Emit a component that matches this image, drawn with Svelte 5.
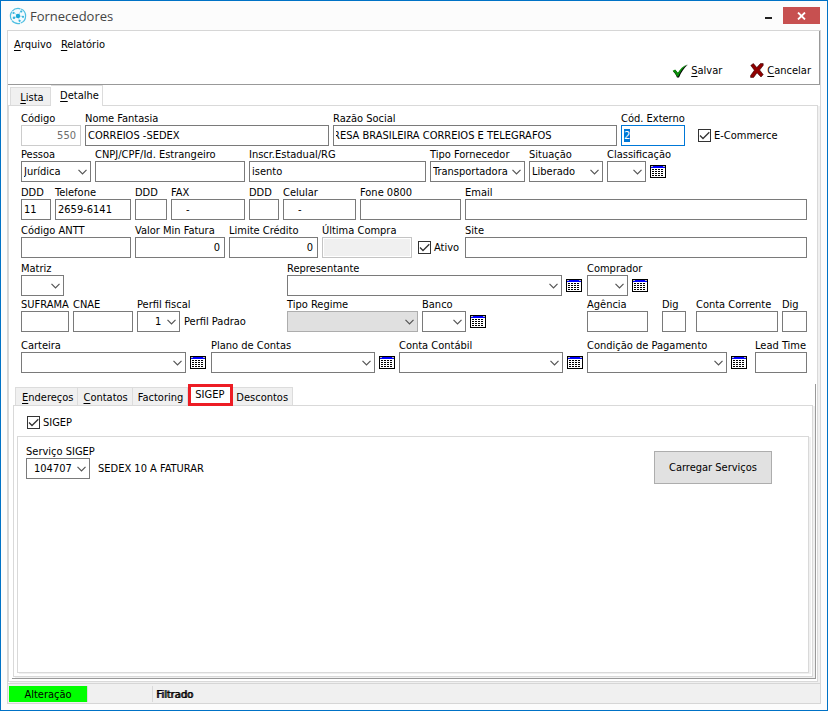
<script>
  import { onMount } from 'svelte';

  let externalCode;
  let activeTab = $state('SIGEP');

  const tabs = [
    { id: 'Endereços', key: 'E', rest: 'ndereços' },
    { id: 'Contatos', key: 'C', rest: 'ontatos' },
    { id: 'Factoring', key: '', rest: 'Factoring' },
    { id: 'SIGEP', key: '', rest: 'SIGEP' },
    { id: 'Descontos', key: '', rest: 'Descontos' }
  ];

  onMount(() => {
    externalCode.focus();
    externalCode.select();
  });
</script>

{#snippet text(id, label, value = '', kind = '')}
  <div class="field">
    <label for={id}>{label}</label>
    <input {id} type="text" class={kind} {value} disabled={kind.includes('disabled')} />
  </div>
{/snippet}

{#snippet combo(id, label, value = '', kind = '')}
  <div class="field">
    <label for={id}>{label}</label>
    <span class="combo">
      <select {id} class={kind} disabled={kind.includes('disabled')}><option>{value}</option></select>
      <svg class="arrow" viewBox="0 0 9 6" width="9" height="6" aria-hidden="true">
        <path d="M.5 .8L4.5 4.8L8.5 .8" fill="none" stroke="#555" stroke-width="1.2" />
      </svg>
    </span>
  </div>
{/snippet}

{#snippet check(id, label)}
  <span class="check">
    <span class="tick">
      <input {id} type="checkbox" checked />
      <svg viewBox="0 0 13 13" width="13" height="13" aria-hidden="true">
        <path d="M2 6.5L5 9.5L11.3 3.2" fill="none" stroke="#333" stroke-width="1.3" />
      </svg>
    </span>
    <label for={id}>{label}</label>
  </span>
{/snippet}

{#snippet lookup(label)}
  <button class="lookup" type="button" aria-label={label}>
    <svg viewBox="0 0 16 13" width="16" height="13" shape-rendering="crispEdges" aria-hidden="true">
      <rect width="16" height="13" fill="#000" />
      <rect x="1" y="1" width="14" height="11" fill="#fff" />
      <rect x="1" y="1" width="14" height="2" fill="#00f" />
      <rect x="1" y="1" width="2" height="1" fill="#bbb" />
      <rect x="13" y="1" width="2" height="1" fill="#bbb" />
      <path d="M2 4.5h12M2 6.5h12M2 8.5h12M2 10.5h12" stroke="#000" stroke-dasharray="2 1" />
    </svg>
  </button>
{/snippet}

<div class="window">
  <header class="titlebar">
    <svg class="logo" viewBox="0 0 18 18" width="18" height="18" aria-hidden="true">
      <circle cx="9" cy="9" r="7.6" fill="#f4fbfe" stroke="#4fbfe2" stroke-width="1.2" stroke-dasharray="9 .7" />
      <path d="M9 9L4.5 5M9 9L12 3.5M9 9L14.5 9.5M9 9L4 11.5M9 9L10.5 14" stroke="#8fd6ec" stroke-width=".8" />
      <circle cx="9" cy="9" r="2.2" fill="#1ba8d6" />
      <circle cx="4.5" cy="6" r="1.1" fill="#36b4dc" />
      <circle cx="12.3" cy="4.5" r="1.1" fill="#36b4dc" />
      <circle cx="14" cy="9.8" r="1.1" fill="#36b4dc" />
      <circle cx="5" cy="10.8" r="1.3" fill="#36b4dc" />
      <circle cx="10.6" cy="13.8" r="1.1" fill="#36b4dc" />
    </svg>
    <h1>Fornecedores</h1>
    <button class="minimize" type="button" aria-label="Minimizar"></button>
    <button class="close" type="button" aria-label="Fechar">
      <svg viewBox="0 0 9 8" width="9" height="8" aria-hidden="true">
        <path d="M1 .5L8 7.5M8 .5L1 7.5" stroke="#fff" stroke-width="1.8" />
      </svg>
    </button>
  </header>

  <div class="client">
    <div class="toolbar">
      <nav>
        <button type="button"><u>A</u>rquivo</button>
        <button type="button"><u>R</u>elatório</button>
      </nav>
      <div class="actions">
        <button type="button">
          <svg viewBox="0 0 16 14" width="16" height="14" aria-hidden="true">
            <path d="M1 7.5L3.5 6L6 9C8.5 5.5 11.5 2.5 16 .5C12 4 9 8.5 7 13.5L5 13.5C4 11 3 9 1 7.5Z" fill="#000" />
            <path d="M.6 6.8L3.2 5.6L5.7 9C8.2 5 11 2.2 14.8 .6C11.2 3.8 8.2 8 6.2 12.6L5 12.6C3.8 10 2.6 8.3 .6 6.8Z" fill="#0a8f0a" />
          </svg>
          <span><u>S</u>alvar</span>
        </button>
        <button type="button">
          <svg viewBox="0 0 14 15" width="14" height="15" aria-hidden="true">
            <path d="M.8 2.4L3.4 .6L6.8 4.6L10.4 .6H13.2V2.4L9.6 7L13.2 11.6L11 14L7 9.8L3.6 14.4H.6V12.6L4.4 7.2Z" fill="#900000" stroke="#300" stroke-width=".6" />
          </svg>
          <span><u>C</u>ancelar</span>
        </button>
      </div>
    </div>

    <div class="tabs main-tabs" role="tablist">
      <button type="button" role="tab" aria-selected="false"><span><u>L</u>ista</span></button>
      <button type="button" role="tab" aria-selected="true" class="active"><span><u>D</u>etalhe</span></button>
    </div>

    <main class="page">
      <form>
        <div class="row identity">
          {@render text('codigo', 'Código', '550', 'right disabled')}
          {@render text('nome', 'Nome Fantasia', 'CORREIOS -SEDEX')}
          {@render text('razao', 'Razão Social', 'RESA BRASILEIRA CORREIOS E TELEGRAFOS', 'scrolled')}
          <div class="field">
            <label for="externo">Cód. Externo</label>
            <input id="externo" type="text" class="current" value="2" bind:this={externalCode} />
          </div>
          {@render check('ecommerce', 'E-Commerce')}
        </div>

        <div class="row tight person">
          {@render combo('pessoa', 'Pessoa', 'Jurídica')}
          {@render text('cnpj', 'CNPJ/CPF/Id. Estrangeiro')}
          {@render text('inscricao', 'Inscr.Estadual/RG', 'isento')}
          {@render combo('tipo', 'Tipo Fornecedor', 'Transportadora')}
          {@render combo('situacao', 'Situação', 'Liberado')}
          {@render combo('classificacao', 'Classificação')}
          {@render lookup('Buscar classificação')}
        </div>

        <div class="row contact">
          {@render text('ddd1', 'DDD', '11')}
          {@render text('telefone', 'Telefone', '2659-6141')}
          {@render text('ddd2', 'DDD')}
          {@render text('fax', 'FAX', '-', 'masked')}
          {@render text('ddd3', 'DDD')}
          {@render text('celular', 'Celular', '-', 'masked')}
          {@render text('fone0800', 'Fone 0800')}
          {@render text('email', 'Email')}
        </div>

        <div class="row values">
          {@render text('antt', 'Código ANTT')}
          {@render text('minimo', 'Valor Min Fatura', '0', 'right')}
          {@render text('limite', 'Limite Crédito', '0', 'right')}
          {@render text('ultima', 'Última Compra', '', 'disabled shaded')}
          {@render check('ativo', 'Ativo')}
          {@render text('site', 'Site')}
        </div>

        <div class="row people">
          {@render combo('matriz', 'Matriz')}
          <span></span>
          {@render combo('representante', 'Representante')}
          {@render lookup('Buscar representante')}
          {@render combo('comprador', 'Comprador')}
          {@render lookup('Buscar comprador')}
        </div>

        <div class="row tight bank">
          {@render text('suframa', 'SUFRAMA')}
          {@render text('cnae', 'CNAE')}
          {@render combo('perfil', 'Perfil fiscal', '1', 'inset-wide')}
          <output for="perfil">Perfil Padrao</output>
          {@render combo('regime', 'Tipo Regime', '', 'disabled')}
          {@render combo('banco', 'Banco')}
          {@render lookup('Buscar banco')}
          <span></span>
          {@render text('agencia', 'Agência')}
          <span></span>
          {@render text('digito1', 'Dig')}
          <span></span>
          {@render text('conta', 'Conta Corrente')}
          {@render text('digito2', 'Dig')}
        </div>

        <div class="row loose accounts">
          {@render combo('carteira', 'Carteira')}
          {@render lookup('Buscar carteira')}
          {@render combo('plano', 'Plano de Contas')}
          {@render lookup('Buscar plano de contas')}
          {@render combo('contabil', 'Conta Contábil')}
          {@render lookup('Buscar conta contábil')}
          {@render combo('condicao', 'Condição de Pagamento')}
          {@render lookup('Buscar condição de pagamento')}
          {@render text('lead', 'Lead Time')}
        </div>
      </form>

      <section class="details">
        <div class="tabs sub-tabs" role="tablist">
          {#each tabs as tab}
            <button
              type="button"
              role="tab"
              aria-selected={activeTab === tab.id}
              class:active={activeTab === tab.id}
              onclick={() => (activeTab = tab.id)}
            ><span>{#if tab.key}<u>{tab.key}</u>{/if}{tab.rest}</span></button>
          {/each}
        </div>
        <div class="sheet">
          {@render check('sigep', 'SIGEP')}
          <div class="panel">
            <div class="service">
              {@render combo('servico', 'Serviço SIGEP', '104707', 'inset')}
              <output for="servico">SEDEX 10 A FATURAR</output>
            </div>
            <button class="load" type="button">Carregar Serviços</button>
          </div>
        </div>
      </section>
    </main>

    <footer class="status">
      <span class="mode">Alteração</span>
      <span class="blank"></span>
      <strong>Filtrado</strong>
    </footer>
  </div>
</div>

<style>
  :global(body) {
    background: #fcfcfc;
  }

  .window,
  .window * {
    box-sizing: border-box;
  }

  .window {
    display: flex;
    flex-direction: column;
    min-height: 100vh;
    padding: 0 6px 6px 6px;
    border: 1px solid #0072c6;
    background: #fcfcfc;
    color: #000;
    font: 11px/14px 'DejaVu Sans Condensed', 'Noto Sans', sans-serif;
  }

  button,
  input,
  select {
    margin: 0;
    padding: 0;
    border: 0;
    border-radius: 0;
    background: none;
    color: inherit;
    font: inherit;
    outline: none;
  }

  u {
    text-underline-offset: 2px;
  }

  .titlebar {
    display: flex;
    align-items: center;
    height: 29px;
    padding: 0 1px 0 2px;
  }

  h1 {
    flex: 1;
    margin: 0 0 0 3px;
    color: #444;
    font: 13px/18px 'Open Sans', 'Noto Sans', sans-serif;
  }

  .minimize {
    width: 7px;
    height: 2px;
    margin: 4px 11px 0 0;
    background: #222;
  }

  .close {
    display: flex;
    align-items: center;
    justify-content: center;
    width: 37px;
    height: 17px;
    background: #c75050;
  }

  .client {
    flex: 1;
    display: flex;
    flex-direction: column;
    border: 1px solid #d6d6d6;
    background: #fff;
  }

  .toolbar {
    height: 54px;
    padding: 7px 8px 0 6px;
    border-right: 1px solid #999;
    border-bottom: 1px solid #999;
  }

  nav {
    display: flex;
    gap: 9px;
  }

  .actions {
    display: flex;
    justify-content: flex-end;
    gap: 28px;
    padding-top: 11px;
  }

  .actions button {
    display: flex;
    align-items: center;
    gap: 3px;
  }

  .tabs {
    display: flex;
    align-items: flex-end;
  }

  .tabs button {
    height: 18px;
    border: 1px solid #dcdcdc;
    border-width: 1px 1px 0 0;
    background: #f0f0f0;
    white-space: nowrap;
  }

  .tabs button:first-child {
    border-left-width: 1px;
  }

  .tabs .active {
    background: #fff;
  }

  .main-tabs {
    height: 20px;
    padding-left: 2px;
  }

  .main-tabs button {
    width: 41px;
    padding: 2px 0 0 3px;
  }

  .main-tabs .active {
    width: 52px;
    height: 21px;
    margin-bottom: -1px;
    padding: 0 0 1px 6px;
    position: relative;
  }

  .page {
    flex: 1;
    display: flex;
    flex-direction: column;
    margin-right: 2px;
    padding: 5px 1px 2px 3px;
    border: 1px solid #d9d9d9;
    box-shadow: 2px 1px 0 #f0f0f0;
  }

  form {
    display: flex;
    flex-direction: column;
    padding: 0 9px;
  }

  .row {
    display: grid;
    column-gap: 4px;
    align-items: end;
    margin-top: 3px;
  }

  .row.tight {
    margin-top: 1px;
  }

  .row.loose {
    margin-top: 6px;
  }

  .row:first-child {
    margin-top: 0;
  }

  .identity {
    grid-template-columns: 60px 244fr 284fr 64px 118px;
  }

  .person {
    grid-template-columns: 70px 150fr 177fr 95px 74px 39px 157fr;
  }

  .contact {
    grid-template-columns: 30px 76px 32px 74px 30px 73px 101px 1fr;
  }

  .values {
    grid-template-columns: 110px 90px 89px 90px 45px 1fr;
  }

  .people {
    grid-template-columns: 43px 215fr 275fr 17px 41px 175fr;
  }

  .bank {
    grid-template-columns: 48px 60px 43px 99fr 131fr 44px 17px 92fr 61px 6px 24px 2px 82px 25px;
  }

  .accounts {
    grid-template-columns: 165fr 17px 164fr 16px 164fr 16px 140fr 20px 52px;
  }

  .field {
    display: flex;
    flex-direction: column;
    min-width: 0;
  }

  label,
  output {
    white-space: nowrap;
  }

  .field label {
    height: 14px;
    line-height: 16px;
  }

  .field input,
  select {
    width: 100%;
    height: 21px;
    padding: 0 2px;
    border: 1px solid #7a7a7a;
    background: #fff;
  }

  select {
    display: block;
    appearance: none;
  }

  select.inset {
    padding-left: 7px;
  }

  select.inset-wide {
    padding-left: 17px;
  }

  select.disabled {
    border-color: #adadad;
    background: #e0e0e0;
    opacity: 1;
  }

  .field .right {
    padding-right: 4px;
    text-align: right;
  }

  .field .disabled:disabled {
    border-color: #ccc;
    color: #6d6d6d;
  }

  .field .shaded:disabled {
    border-color: #c4c4c4;
    background: #f0f0f0;
    box-shadow: inset 0 0 0 1px #fff;
  }

  .field select.disabled:disabled {
    border-color: #adadad;
  }

  .field .scrolled {
    text-indent: -3px;
  }

  .field .masked {
    padding-left: 14px;
  }

  .field .current {
    border-color: #0078d7;
  }

  .current::selection {
    background: #0078d7;
    color: #fff;
  }

  .combo {
    display: block;
    position: relative;
  }

  .arrow {
    position: absolute;
    top: 8px;
    right: 4px;
    pointer-events: none;
  }

  .check {
    display: flex;
    align-items: center;
    gap: 3px;
    height: 21px;
  }

  .check label {
    line-height: 16px;
  }

  .identity .check {
    padding-left: 9px;
  }

  .values .check {
    padding-left: 2px;
  }

  .tick {
    position: relative;
    width: 13px;
    height: 13px;
  }

  .tick input {
    display: block;
    width: 13px;
    height: 13px;
    appearance: none;
    border: 1px solid #333;
    background: #fff;
  }

  .tick svg {
    position: absolute;
    top: 0;
    left: 0;
    visibility: hidden;
    pointer-events: none;
  }

  .tick input:checked + svg {
    visibility: visible;
  }

  .lookup {
    display: flex;
    align-items: center;
    height: 21px;
  }

  output {
    line-height: 21px;
  }

  .details {
    flex: 1;
    display: flex;
    flex-direction: column;
    margin-top: 11px;
    border-right: 1px solid #999;
    border-bottom: 1px solid #999;
  }

  .sub-tabs {
    height: 21px;
    padding-left: 3px;
  }

  .sub-tabs button {
    padding: 2px 4px 0 5px;
  }

  .sub-tabs button:first-child {
    padding-left: 6px;
  }

  .sub-tabs .active {
    position: relative;
    height: 22px;
    margin-bottom: -1px;
    padding: 0 6px 1px 4px;
    border: 3px solid #ed1c24;
  }

  .sub-tabs .active + button {
    padding-left: 3px;
  }

  .sheet {
    flex: 1;
    display: flex;
    flex-direction: column;
    margin: 0 2px 1px 1px;
    padding: 6px 3px 3px;
    border: 1px solid #d9d9d9;
    box-shadow: 2px 1px 0 #f0f0f0;
  }

  .sheet > .check {
    padding-left: 10px;
  }

  .panel {
    flex: 1;
    display: flex;
    align-items: flex-start;
    justify-content: space-between;
    margin-top: 3px;
    padding: 7px 36px 7px 8px;
    border: 1px solid #d9d9d9;
    box-shadow: 2px 1px 0 #f0f0f0;
  }

  .service {
    display: flex;
    align-items: flex-end;
    gap: 8px;
  }

  .service .field {
    width: 64px;
  }

  .load {
    width: 118px;
    height: 33px;
    margin-top: 7px;
    border: 1px solid #adadad;
    background: #e1e1e1;
  }

  .status {
    display: flex;
    height: 20px;
    margin-top: 1px;
    padding: 2px 1px 1px;
    border-top: 1px solid #d6d6d6;
    background: #f0f0f0;
    line-height: 18px;
  }

  .mode {
    width: 78px;
    background: #0f0;
    text-align: center;
  }

  .blank {
    width: 66px;
    border: 1px solid #d9d9d9;
    border-width: 0 1px;
  }

  strong {
    padding-left: 3px;
    font-weight: normal;
    text-shadow: 1px 0 #000;
  }
</style>
